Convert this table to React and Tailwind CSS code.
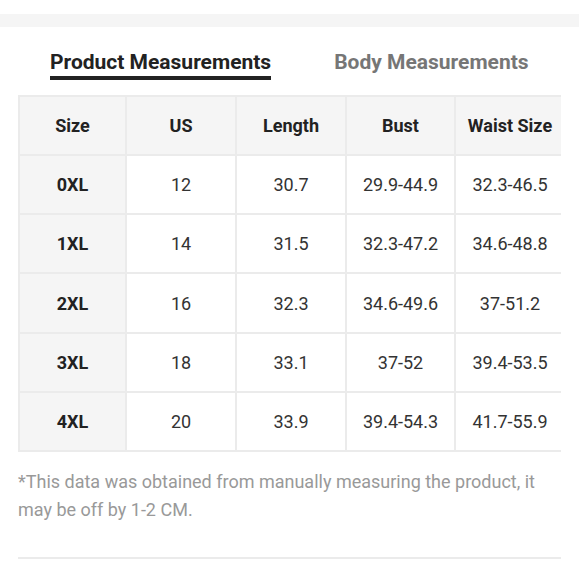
const rows = [
  ['0XL', '12', '30.7', '29.9-44.9', '32.3-46.5'],
  ['1XL', '14', '31.5', '32.3-47.2', '34.6-48.8'],
  ['2XL', '16', '32.3', '34.6-49.6', '37-51.2'],
  ['3XL', '18', '33.1', '37-52', '39.4-53.5'],
  ['4XL', '20', '33.9', '39.4-54.3', '41.7-55.9'],
]

const headers = ['Size', 'US', 'Length', 'Bust', 'Waist Size']
const widths = ['w-[107px]', 'w-[110px]', 'w-[110px]', 'w-[109px]', 'w-[110px]']
const rowH = ['h-[59px]', 'h-[59px]', 'h-[60px]', 'h-[59px]', 'h-[59px]']

export default function App() {
  return (
    <div className="w-[579px] h-[580px] bg-white overflow-hidden font-['Roboto',sans-serif]">
      <div className="h-[14px]" />
      <div className="h-[13px] bg-[#f5f5f5]" />

      {/* tabs */}
      <div className="flex gap-[63px] pl-[50px] pt-[21px]">
        <div className="flex flex-col">
          <span className="text-[21px] leading-[28px] font-bold text-[#222]">Product Measurements</span>
          <span className="h-[4px] bg-[#222]" />
        </div>
        <span className="text-[21px] leading-[28px] font-bold text-[#767676]">Body Measurements</span>
      </div>

      <div className="px-[18px] pt-[15px]">
        <div className="overflow-hidden">
          <table className="border-collapse table-fixed w-[546px]">
            <thead>
              <tr className="h-[59px]">
                {headers.map((h, i) => (
                  <th
                    key={h}
                    className={`${widths[i]} border-2 border-[#ebebeb] bg-[#f5f5f5] text-[18px] font-bold text-[#222] text-center`}
                  >
                    {h}
                  </th>
                ))}
              </tr>
            </thead>
            <tbody>
              {rows.map((r, ri) => (
                <tr key={r[0]} className={rowH[ri]}>
                  {r.map((c, i) => (
                    <td
                      key={i}
                      className={
                        i === 0
                          ? 'border-2 border-[#ebebeb] bg-[#f5f5f5] text-[18px] font-bold text-[#222] text-center'
                          : 'border-2 border-[#ebebeb] text-[18px] text-[#333] text-center'
                      }
                    >
                      {c}
                    </td>
                  ))}
                </tr>
              ))}
            </tbody>
          </table>
        </div>

        <p className="mt-[16px] pr-[10px] text-[18px] leading-[28px] text-[#999]">
          *This data was obtained from manually measuring the product, it may be off by 1-2 CM.
        </p>
        <div className="mt-[33px] h-[2px] bg-[#ebebeb]" />
      </div>
      <div className="mt-[21px] h-[13px] bg-[#f5f5f5]" />
    </div>
  )
}
